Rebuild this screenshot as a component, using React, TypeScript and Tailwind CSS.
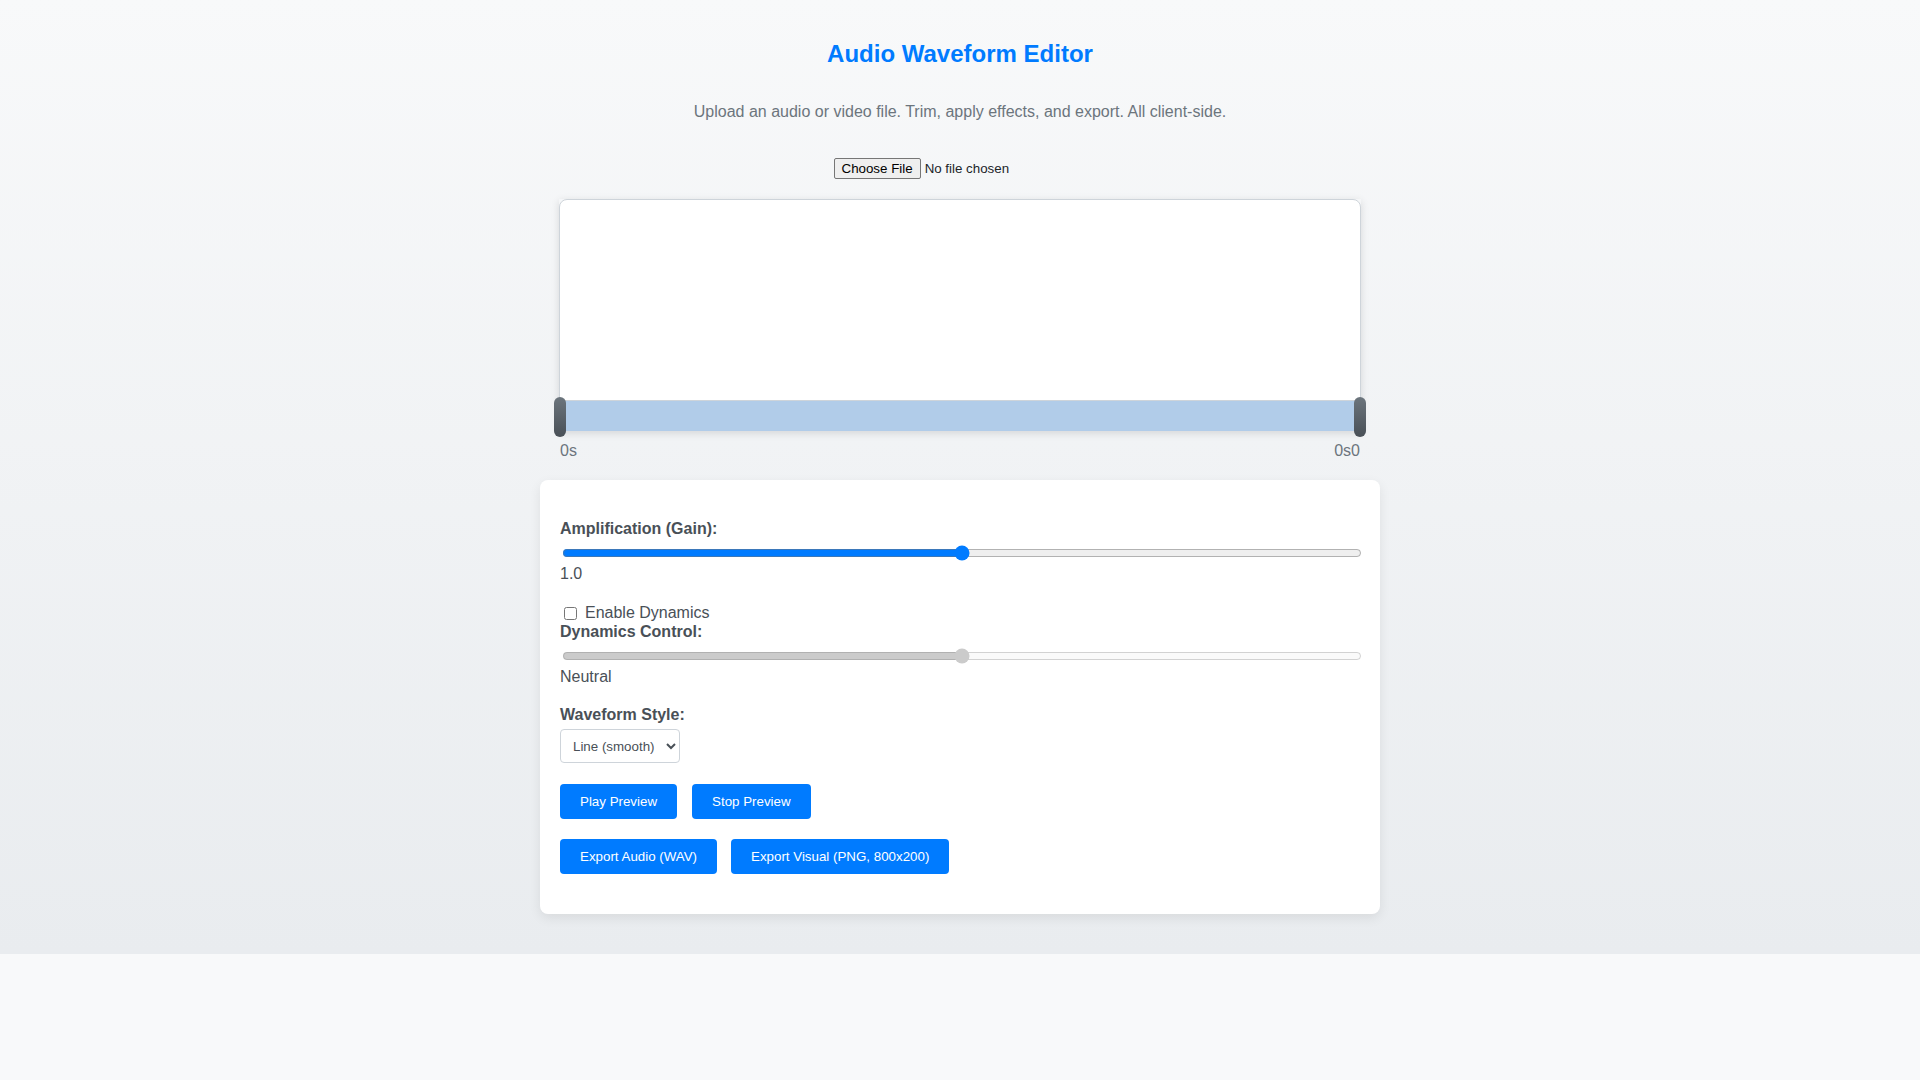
import React from "react";

function TrimHandle({ side }: { side: "left" | "right" }) {
  return (
    <div
      className={`absolute top-[-4px] h-[40px] w-[12px] rounded-[6px] bg-linear-to-b from-[#6c757d] to-[#495057] ${
        side === "left" ? "left-[-5px]" : "right-[-5px]"
      }`}
    />
  );
}

function ActionButton({ children }: { children: React.ReactNode }) {
  return (
    <button className="h-[35px] rounded-[4px] bg-[#007bff] px-5 text-[13.333px] text-white">
      {children}
    </button>
  );
}

export default function App() {
  return (
    <div className="min-h-screen bg-[#f8f9fa] font-['Liberation_Sans',Arial,sans-serif]">
      <div className="bg-linear-to-b from-[#f8f9fa] to-[#e9ecef] pb-[40px] pt-[40px]">
        <h1 className="text-center text-[24px] font-bold leading-[28px] text-[#007bff]">
          Audio Waveform Editor
        </h1>
        <p className="mt-[35px] text-center text-[16px] leading-[18px] text-[#6c757d]">
          Upload an audio or video file. Trim, apply effects, and export. All client-side.
        </p>
        <div className="mt-[37px] flex h-[21px] justify-center">
          <input
            type="file"
            accept="audio/*,video/*"
            className="text-[13.333px] text-[#212529] file:mr-[4px] file:h-[21px] file:rounded-[2px] file:border file:border-[#767676] file:bg-[#efefef] file:px-[7px] file:text-black"
          />
        </div>

        {/* waveform + trim bar */}
        <div className="relative mx-auto mt-[20px] w-[802px] shadow-[0_2px_8px_rgba(0,0,0,0.12)]">
          <div className="h-[202px] rounded-t-[8px] border border-b border-[#ced4da] bg-white" />
          <div className="relative h-[30px] bg-[#b1cce9]">
            <TrimHandle side="left" />
            <TrimHandle side="right" />
          </div>
        </div>
        <div className="mx-auto mt-[11px] flex w-[800px] justify-between text-[16px] leading-[18px] text-[#6c757d]">
          <span>0s</span>
          <span>0s0</span>
        </div>

        {/* controls */}
        <div className="mx-auto mt-[20px] w-[840px] rounded-[8px] bg-white px-5 pb-[40px] pt-5 text-[16px] text-[#495057] shadow-[0_4px_12px_rgba(0,0,0,0.08)]">
          <label className="mt-[20px] block font-bold leading-[18px]">Amplification (Gain):</label>
          <input
            type="range"
            min={0}
            max={2}
            step={0.1}
            defaultValue={1}
            className="ml-[2px] mt-[7px] block h-[16px] w-full accent-[#007bff]"
          />
          <div className="mt-[4px] leading-[18px]">1.0</div>

          <label className="mt-[21px] flex h-[18px] items-center leading-[18px]">
            <input type="checkbox" className="ml-[4px] h-[13px] w-[13px]" />
            <span className="ml-[8px]">Enable Dynamics</span>
          </label>
          <label className="mt-[1px] block font-bold leading-[18px]">Dynamics Control:</label>
          <input
            type="range"
            min={-1}
            max={1}
            step={0.1}
            defaultValue={0}
            disabled
            className="ml-[2px] mt-[7px] block h-[16px] w-full"
          />
          <div className="mt-[4px] leading-[18px]">Neutral</div>

          <label className="mt-[20px] block font-bold leading-[18px]">Waveform Style:</label>
          <select
            defaultValue="line"
            className="mt-[5px] block h-[34px] w-[120px] rounded-[4px] border border-[#ced4da] bg-white px-2 text-[13.333px] text-[#495057]"
          >
            <option value="line">Line (smooth)</option>
            <option value="bars">Bars</option>
            <option value="filled">Filled</option>
          </select>

          <div className="mt-[21px] flex gap-[15px]">
            <ActionButton>Play Preview</ActionButton>
            <ActionButton>Stop Preview</ActionButton>
          </div>
          <div className="mt-[20px] flex gap-[14px]">
            <ActionButton>Export Audio (WAV)</ActionButton>
            <ActionButton>Export Visual (PNG, 800x200)</ActionButton>
          </div>
        </div>
      </div>
    </div>
  );
}
